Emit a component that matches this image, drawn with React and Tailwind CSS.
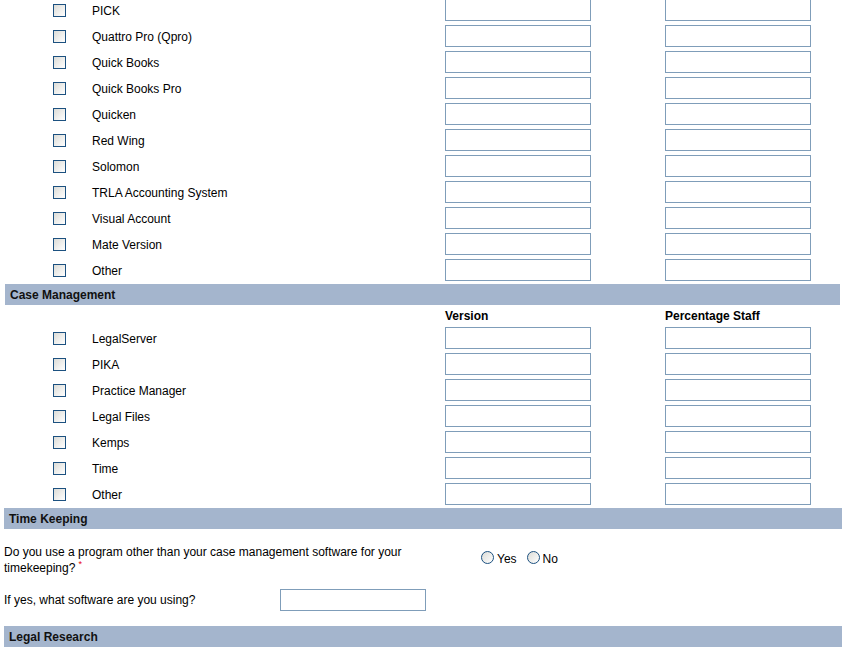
import React from 'react';

const accounting = [
  'PICK',
  'Quattro Pro (Qpro)',
  'Quick Books',
  'Quick Books Pro',
  'Quicken',
  'Red Wing',
  'Solomon',
  'TRLA Accounting System',
  'Visual Account',
  'Mate Version',
  'Other',
];

const caseManagement = ['LegalServer', 'PIKA', 'Practice Manager', 'Legal Files', 'Kemps', 'Time', 'Other'];

const Checkbox = () => (
  <span className="block w-[13px] h-[13px] border border-[#1c5180] bg-gradient-to-br from-[#dcdcd7] to-white" />
);

const Radio = () => (
  <span className="block w-[13px] h-[13px] rounded-full border border-[#1c5180] bg-gradient-to-br from-[#dcdcd7] to-white" />
);

const TextBox = ({ className = '' }) => (
  <span className={`block w-[146px] h-[22px] border border-[#7f9db9] bg-white ${className}`} />
);

// one software line: checkbox, name, version, percentage staff
const SoftwareRow = ({ label }) => (
  <div className="grid grid-cols-[53px_39px_353px_220px_146px] h-[26px] items-center">
    <div />
    <div className="pt-px">
      <Checkbox />
    </div>
    <div className="pt-[2px]">{label}</div>
    <TextBox />
    <TextBox />
  </div>
);

const SectionBar = ({ title, className = '' }) => (
  <div className={`h-[21px] bg-[#a4b5cd] flex items-center px-[5px] font-bold text-[#111] ${className}`}>
    {title}
  </div>
);

export default function App() {
  return (
    <div className="w-[848px] h-[656px] overflow-hidden bg-white text-[12px] leading-[16px] text-black font-['Liberation_Sans',Arial,sans-serif]">
      <div className="-mt-[3px]">
        {accounting.map((name, i) => (
          <SoftwareRow key={i} label={name} />
        ))}

        <div className="h-px" />
        <SectionBar title="Case Management" className="ml-[5px] w-[835px]" />

        <div className="grid grid-cols-[445px_220px_146px] h-[20px] items-center font-bold pt-px">
          <div />
          <div>Version</div>
          <div>Percentage Staff</div>
        </div>

        {caseManagement.map((name, i) => (
          <SoftwareRow key={i} label={name} />
        ))}

        <div className="h-px" />
        <SectionBar title="Time Keeping" className="ml-[4px] w-[838px]" />

        <div className="pl-[4px] pt-[15px] flex items-center">
          <div className="w-[412px]">
            Do you use a program other than your case management software for your timekeeping?
            <span className="inline-block text-[9px] leading-[9px] text-red-600 align-top ml-[3px]">*</span>
          </div>
          <div className="ml-[65px] -mt-[5px] flex items-center">
            <Radio />
            <span className="ml-[3px] mt-[2px]">Yes</span>
            <span className="ml-[10px]">
              <Radio />
            </span>
            <span className="ml-[3px] mt-[2px]">No</span>
          </div>
        </div>

        <div className="pl-[4px] mt-[13px] flex items-center h-[22px]">
          <div className="w-[276px]">If yes, what software are you using?</div>
          <TextBox />
        </div>

        <div className="h-[15px]" />
        <SectionBar title="Legal Research" className="ml-[4px] w-[838px]" />
      </div>
    </div>
  );
}
